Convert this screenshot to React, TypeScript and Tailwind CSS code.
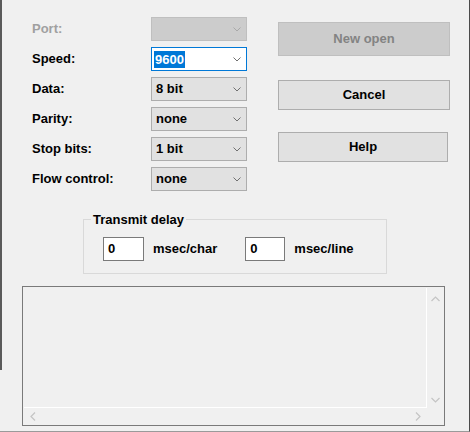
import React from 'react';

const rows = [
  { label: 'Port:', value: '', state: 'disabled' },
  { label: 'Speed:', value: '9600', state: 'focused' },
  { label: 'Data:', value: '8 bit', state: 'normal' },
  { label: 'Parity:', value: 'none', state: 'normal' },
  { label: 'Stop bits:', value: '1 bit', state: 'normal' },
  { label: 'Flow control:', value: 'none', state: 'normal' },
];

function Chevron({ color }: { color: string }) {
  return (
    <svg width="8" height="5" viewBox="0 0 8 5" className="shrink-0">
      <path d="M0.5 0.5 L4 4 L7.5 0.5" fill="none" stroke={color} strokeWidth="1" />
    </svg>
  );
}

function ComboBox({ value, state }: { value: string; state: string }) {
  const box =
    state === 'disabled'
      ? 'bg-[#cccccc] border-[#bfbfbf]'
      : state === 'focused'
        ? 'bg-white border-[#0078d7]'
        : 'bg-[#e1e1e1] border-[#adadad]';
  return (
    <div className={`flex h-[24px] w-[96px] items-center justify-between border pl-[2px] pr-[5px] ${box}`}>
      {state === 'focused' ? (
        <span className="bg-[#0078d7] px-[1px] text-white leading-[17px]">{value}</span>
      ) : (
        <span className="pl-[2px] text-black">{value}</span>
      )}
      <Chevron color={state === 'disabled' ? '#a8a8a8' : '#707070'} />
    </div>
  );
}

function Button({ label, disabled, className }: { label: string; disabled?: boolean; className: string }) {
  return (
    <div
      className={`flex items-center justify-center border ${className} ${
        disabled ? 'bg-[#cccccc] border-[#bfbfbf] text-[#838383]' : 'bg-[#e1e1e1] border-[#adadad] text-black'
      }`}
    >
      {label}
    </div>
  );
}

export default function App() {
  return (
    <div className="relative h-[432px] w-[470px] overflow-hidden border-r border-b border-r-[#4a4a4a] border-b-[#9a9a9a] bg-[#f0f0f0] text-[13px] font-bold font-['Liberation_Sans',Arial,sans-serif]">
      {/* window edge behind the dialog */}
      <div className="absolute left-0 top-0 h-[370px] w-[2px] bg-[#5a5a5a]" />

      <div className="flex pt-[17px]">
        {/* settings */}
        <div className="flex flex-col gap-[6px] pl-[32px]">
          {rows.map((r) => (
            <div key={r.label} className="flex items-center">
              <span className={`w-[119px] ${r.state === 'disabled' ? 'text-[#a0a0a0]' : 'text-black'}`}>{r.label}</span>
              <ComboBox value={r.value} state={r.state} />
            </div>
          ))}
        </div>

        {/* buttons */}
        <div className="ml-[31px] flex flex-col pt-[5px]">
          <Button label="New open" disabled className="h-[34px] w-[172px]" />
          <Button label="Cancel" className="mt-[24px] h-[30px] w-[172px]" />
          <Button label="Help" className="mt-[22px] h-[30px] w-[170px]" />
        </div>
      </div>

      {/* transmit delay group */}
      <fieldset className="ml-[83px] mt-[21px] h-[62px] w-[304px] border border-[#d9d9d9]">
        <legend className="ml-[7px] px-[2px] leading-[15px] text-black">Transmit delay</legend>
        <div className="mt-[10px] flex items-center pl-[19px]">
          <div className="flex h-[24px] w-[41px] items-center border border-[#7a7a7a] bg-white pl-[4px]">0</div>
          <span className="ml-[9px] text-black">msec/char</span>
          <div className="ml-[28px] flex h-[24px] w-[40px] items-center border border-[#7a7a7a] bg-white pl-[4px]">0</div>
          <span className="ml-[9px] text-black">msec/line</span>
        </div>
      </fieldset>

      {/* output area */}
      <div className="ml-[22px] mt-[12px] flex h-[140px] w-[423px] flex-col border border-[#7a7a7a] p-[1px]">
        <div className="flex flex-1">
          <div className="flex-1 border-r border-b border-white" />
          <div className="flex w-[16px] flex-col items-center justify-between pt-[8px] pb-[5px]">
            <svg width="9" height="6" viewBox="0 0 9 6">
              <path d="M0.5 5 L4.5 1 L8.5 5" fill="none" stroke="#c4c4c4" strokeWidth="1.2" />
            </svg>
            <svg width="9" height="6" viewBox="0 0 9 6">
              <path d="M0.5 1 L4.5 5 L8.5 1" fill="none" stroke="#c4c4c4" strokeWidth="1.2" />
            </svg>
          </div>
        </div>
        <div className="flex h-[16px] items-center justify-between pl-[6px] pr-[22px]">
          <svg width="6" height="9" viewBox="0 0 6 9">
            <path d="M5 0.5 L1 4.5 L5 8.5" fill="none" stroke="#c4c4c4" strokeWidth="1.2" />
          </svg>
          <svg width="6" height="9" viewBox="0 0 6 9">
            <path d="M1 0.5 L5 4.5 L1 8.5" fill="none" stroke="#c4c4c4" strokeWidth="1.2" />
          </svg>
        </div>
      </div>
    </div>
  );
}
